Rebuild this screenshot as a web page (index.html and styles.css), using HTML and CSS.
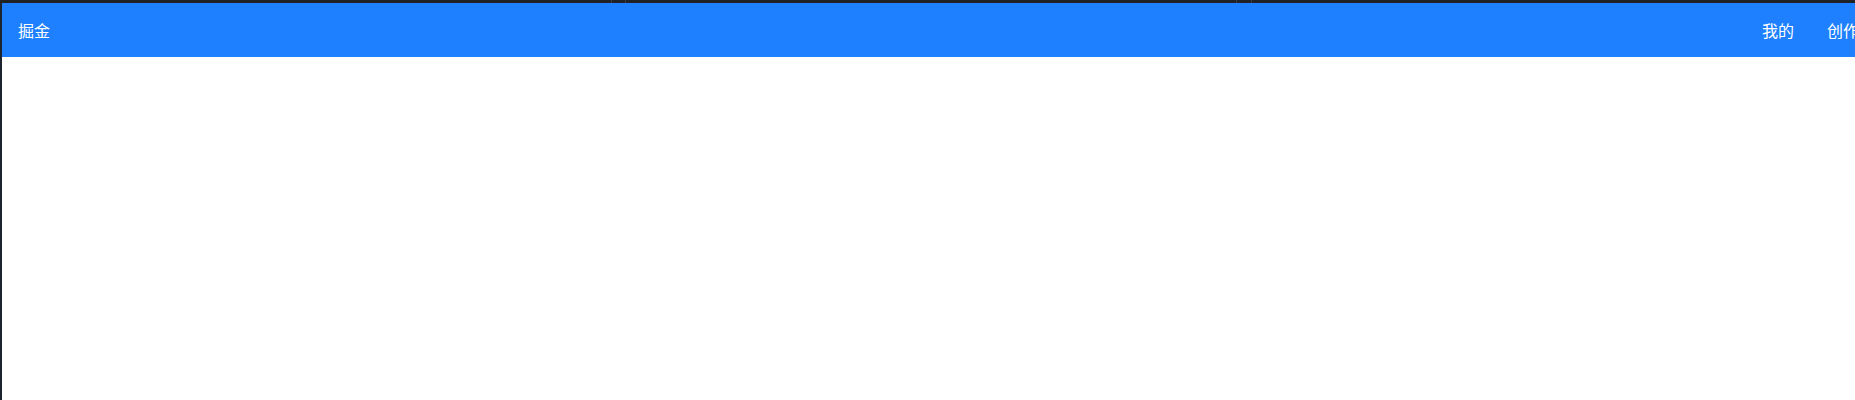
FILE: index.html
```html
<!DOCTYPE html>
<html lang="zh-CN">
<head>
<meta charset="utf-8">
<title>掘金</title>
<link rel="stylesheet" href="styles.css">
</head>
<body>
<div class="topstrip">
  <span class="seg seg-a"></span>
  <span class="seg seg-b"></span>
  <span class="seg seg-c"></span>
  <span class="seg seg-d"></span>
  <span class="seg seg-e"></span>
</div>
<div class="app">
  <header class="nav">
    <div class="logo">掘金</div>
    <nav class="links">
      <a class="link">我的</a>
      <a class="link">创作</a>
    </nav>
  </header>
  <main class="content"></main>
</div>
</body>
</html>
```
FILE: styles.css
```css
html, body {
  margin: 0;
  padding: 0;
  height: 100%;
  overflow: hidden;
}
body {
  background: #1c2430;
  font-family: "Noto Sans CJK SC", "Noto Sans", sans-serif;
}
.topstrip {
  height: 3px;
  display: flex;
  background: #202226;
}
.seg {
  height: 100%;
  border-right: 1px solid #3a3d42;
}
.seg-a { width: 611px; }
.seg-b { width: 13px; }
.seg-c { width: 610px; }
.seg-d { width: 14px; }
.seg-e { flex: 1; border-right: none; }
.app {
  margin-left: 2px;
  width: 1873px;
  height: calc(100% - 3px);
  background: #ffffff;
  display: flex;
  flex-direction: column;
}
.nav {
  height: 54px;
  flex: none;
  background: #1e80ff;
  display: flex;
  align-items: center;
  padding: 0 16px;
  color: #ffffff;
  font-size: 16px;
}
.logo {
  flex: 1;
}
.links {
  display: flex;
  gap: 33px;
}
.link {
  color: #ffffff;
  text-decoration: none;
}
.content {
  flex: 1;
}
```
